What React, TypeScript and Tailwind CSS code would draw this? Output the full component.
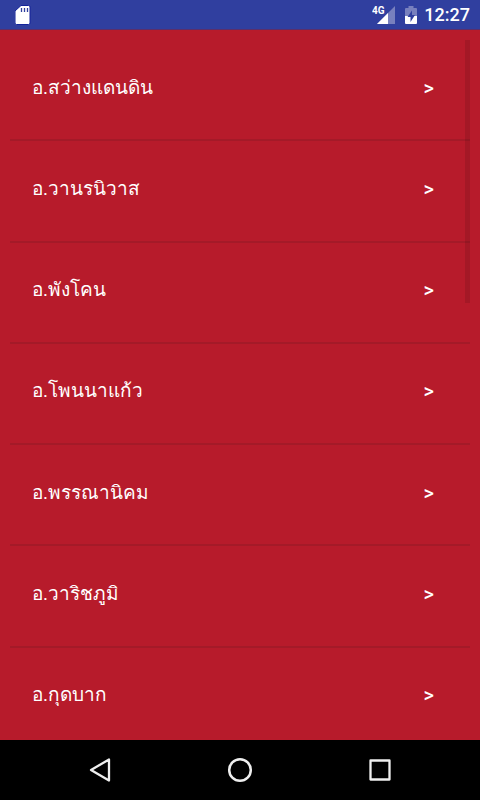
const DISTRICTS = [
  "อ.สว่างแดนดิน",
  "อ.วานรนิวาส",
  "อ.พังโคน",
  "อ.โพนนาแก้ว",
  "อ.พรรณานิคม",
  "อ.วาริชภูมิ",
  "อ.กุดบาก",
];

function StatusBar() {
  return (
    <header className="flex h-[30px] shrink-0 items-center border-b border-[#5a2f6c] bg-[#303f9f] pr-2.5 pl-[15px] text-white">
      {/* SD card */}
      <svg width="16" height="20" viewBox="0 0 16 20">
        <path
          d="M6 0.5h7.5q1.500 0 1.500 1.500v16q0 1.500-1.500 1.500h-12q-1.500 0-1.500-1.500v-12z"
          fill="#fff"
          stroke="#14239a"
        />
        <path d="M6.500 3v4M9.500 3v4M12.500 3v4" stroke="#303f9f" strokeWidth="1.300" />
      </svg>

      <div className="ml-auto flex items-center">
        {/* 4G signal */}
        <svg width="24" height="20" viewBox="0 0 24 20">
          <path d="M23 1v18H5z" fill="#7880be" />
          <path d="M16 8V19H5z" fill="#fff" />
          <text x="0" y="9" fill="#fff" fontSize="10" fontWeight="700">
            4G
          </text>
        </svg>

        {/* Battery */}
        <svg className="ml-2" width="14" height="20" viewBox="0 0 14 20">
          <path d="M4.500 1h5v2H12q1 0 1 1v7H1V4q0-1 1-1h2.500z" fill="#7880be" />
          <path d="M1 11h12V18q0 1-1 1H2q-1 0-1-1z" fill="#fff" />
          <path d="M8 5.500L3.500 12H6.500v5L11 10H8z" fill="#303f9f" />
        </svg>

        <span className="ml-1.5 text-lg leading-5 font-medium">12:27</span>
      </div>
    </header>
  );
}

function DistrictList() {
  return (
    <main className="relative flex min-h-0 flex-1 flex-col overflow-hidden px-2.5">
      <ul className="-mb-[9px] grid flex-1 auto-rows-fr pt-2.5">
        {DISTRICTS.map((name) => (
          <li key={name} className="border-b-2 border-[#a41a28]">
            <button
              type="button"
              className="flex h-full w-full items-center justify-between pr-9 pb-1 pl-[22px] leading-7"
            >
              <span className="text-[19px]">{name}</span>
              <span className="text-xl font-medium">&gt;</span>
            </button>
          </li>
        ))}
      </ul>

      {/* Scroll thumb */}
      <div className="absolute top-2.5 right-2.5 h-[37%] w-[5px] bg-black/10" />
    </main>
  );
}

function NavigationBar() {
  return (
    <nav className="flex h-[60px] shrink-0 items-center justify-center gap-[110px] bg-black">
      <button type="button" aria-label="Back">
        <svg width="30" height="30" viewBox="0 0 30 30" fill="none" stroke="#eee" strokeWidth="2.300" strokeLinejoin="round">
          <path d="M24 4.500v21L6 15z" />
        </svg>
      </button>
      <button type="button" aria-label="Home">
        <svg width="30" height="30" viewBox="0 0 30 30" fill="none" stroke="#eee" strokeWidth="2.500">
          <circle cx="15" cy="15" r="10.800" />
        </svg>
      </button>
      <button type="button" aria-label="Recent apps">
        <svg width="30" height="30" viewBox="0 0 30 30" fill="none" stroke="#eee" strokeWidth="2.300" strokeLinejoin="round">
          <path d="M5.500 5.500h19v19H5.500z" />
        </svg>
      </button>
    </nav>
  );
}

export default function App() {
  return (
    <div className="flex h-screen flex-col bg-[#b71b2b] font-['Roboto','Noto_Sans',sans-serif] text-white">
      <StatusBar />
      <DistrictList />
      <NavigationBar />
    </div>
  );
}
